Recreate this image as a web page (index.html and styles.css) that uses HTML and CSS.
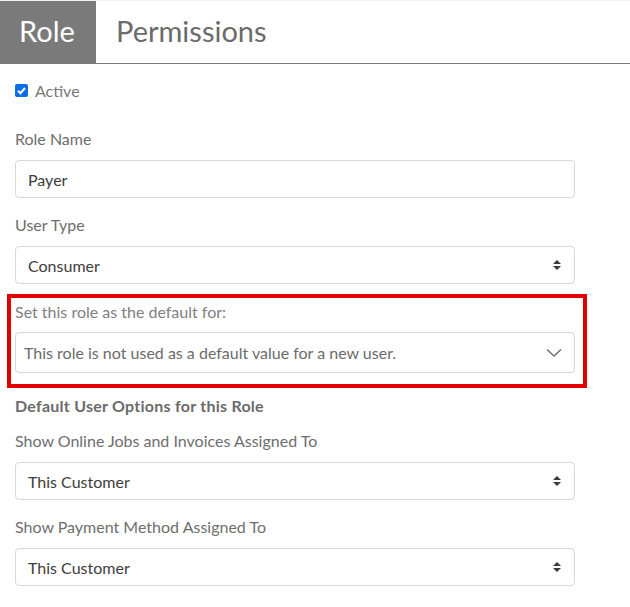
FILE: index.html
```html
<!DOCTYPE html>
<html>
<head>
<meta charset="utf-8">
<link rel="stylesheet" href="styles.css">
</head>
<body>
<div class="tabs">
  <div class="tab active">Role</div>
  <div class="tab">Permissions</div>
  <div class="tab-fill"></div>
</div>
<div class="form">
  <label class="check"><span class="box"><svg viewBox="0 0 13 13" width="13" height="13"><rect x="0" y="0" width="13" height="13" rx="2" fill="#0b6fe8"/><path d="M3 6.8 L5.4 9.2 L10 4" fill="none" stroke="#fff" stroke-width="2"/></svg></span>Active</label>
  <div class="group first">
    <div class="label">Role Name</div>
    <div class="control">Payer</div>
  </div>
  <div class="group">
    <div class="label">User Type</div>
    <div class="control select">Consumer<span class="updown"><svg viewBox="0 0 10 14" width="10" height="14"><path d="M1 6 L5 2 L9 6 Z M1 8 L5 12 L9 8 Z" fill="#343a40"/></svg></span></div>
  </div>
  <div class="highlight">
    <div class="label light">Set this role as the default for:</div>
    <div class="control select tall light-text">This role is not used as a default value for a new user.<span class="chev"><svg viewBox="0 0 16 10" width="16" height="10"><path d="M1 1.5 L8 8 L15 1.5" fill="none" stroke="#6b7280" stroke-width="1.6"/></svg></span></div>
  </div>
  <div class="heading">Default User Options for this Role</div>
  <div class="group">
    <div class="label">Show Online Jobs and Invoices Assigned To</div>
    <div class="control select">This Customer<span class="updown"><svg viewBox="0 0 10 14" width="10" height="14"><path d="M1 6 L5 2 L9 6 Z M1 8 L5 12 L9 8 Z" fill="#343a40"/></svg></span></div>
  </div>
  <div class="group">
    <div class="label">Show Payment Method Assigned To</div>
    <div class="control select">This Customer<span class="updown"><svg viewBox="0 0 10 14" width="10" height="14"><path d="M1 6 L5 2 L9 6 Z M1 8 L5 12 L9 8 Z" fill="#343a40"/></svg></span></div>
  </div>
</div>
</body>
</html>
```

FILE: styles.css
```css
html, body {
  margin: 0;
  padding: 0;
  background: #fff;
  font-family: "Lato", "Noto Sans", sans-serif;
  color: #666;
}
.tabs {
  display: flex;
  height: 62px;
  border-top: 1px solid #f2f2f2;
  border-bottom: 1px solid #7a7a7a;
}
.tab {
  font-size: 29px;
  line-height: 59px;
  padding: 0 20px;
  color: #6b6b6b;
}
.tab.active {
  background: #7a7a7a;
  color: #fff;
  width: 96px;
  box-sizing: border-box;
  padding: 0 0 0 19px;
}
.form {
  width: 560px;
  padding: 0 0 0 15px;
}
.check {
  display: flex;
  align-items: center;
  font-size: 16px;
  height: 20px;
  margin-top: 16px;
  color: #777;
}
.box {
  display: inline-flex;
  width: 13px;
  height: 13px;
  margin-right: 7px;
}
.group {
  margin-top: 17px;
}
.group.first {
  margin-top: 29px;
}
.label {
  font-size: 16px;
  line-height: 20px;
  color: #6e6e6e;
  margin-bottom: 11px;
}
.label.light {
  color: #808080;
}
.control {
  position: relative;
  height: 38px;
  box-sizing: border-box;
  border: 1px solid #d4d7db;
  border-radius: 4px;
  padding: 0 12px;
  display: flex;
  align-items: center;
  font-size: 16px;
  color: #3d3d3d;
}
.control.tall {
  height: 41px;
  padding-left: 8px;
}
.light-text {
  color: #6b6b6b;
}
.updown {
  position: absolute;
  right: 12px;
  top: 11px;
  display: flex;
}
.chev {
  position: absolute;
  right: 12px;
  top: 15px;
  display: flex;
}
.highlight {
  margin: 10px 0 0 -8px;
  width: 580px;
  box-sizing: border-box;
  border: 4px solid #e30000;
  padding: 4px 8px 11px 4px;
}
.highlight .label {
  margin-bottom: 10px;
}
.heading {
  margin-top: 8px;
  font-size: 16px;
  font-weight: 700;
  letter-spacing: 0.25px;
  color: #6b6b6b;
  line-height: 20px;
}
.heading + .group {
  margin-top: 15px;
}
```
